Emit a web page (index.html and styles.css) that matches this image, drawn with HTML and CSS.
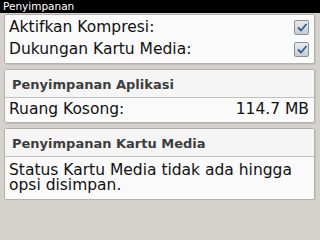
FILE: index.html
```html
<!DOCTYPE html>
<html lang="id">
<head>
  <meta charset="UTF-8" />
  <title>Penyimpanan</title>
  <link rel="stylesheet" href="styles.css">
</head>
<body>
  <div class="titlebar">Penyimpanan</div>
  <div class="content">
    <div class="card">
      <div class="row">
        <span>Aktifkan Kompresi:</span>
        <span class="check"><svg viewBox="0 0 14 14" width="14" height="14"><path d="M3 7.5 L6 10.5 L11.5 4" fill="none" stroke="#2e5f9e" stroke-width="1.8"/></svg></span>
      </div>
      <div class="row">
        <span>Dukungan Kartu Media:</span>
        <span class="check"><svg viewBox="0 0 14 14" width="14" height="14"><path d="M3 7.5 L6 10.5 L11.5 4" fill="none" stroke="#2e5f9e" stroke-width="1.8"/></svg></span>
      </div>
    </div>

    <div class="card">
      <div class="card-head">Penyimpanan Aplikasi</div>
      <div class="row">
        <span>Ruang Kosong:</span>
        <span>114.7 MB</span>
      </div>
    </div>

    <div class="card">
      <div class="card-head">Penyimpanan Kartu Media</div>
      <div class="note">Status Kartu Media tidak ada hingga opsi disimpan.</div>
    </div>
  </div>
</body>
</html>
```

FILE: styles.css
```css
body {
  margin: 0;
  background-color: #d5d2ce;
  font-family: 'DejaVu Sans', sans-serif;
  color: #111;
}
.titlebar {
  height: 13px;
  line-height: 13px;
  background-color: #000;
  color: #fff;
  font-size: 10.5px;
  padding-left: 3px;
}
.content {
  display: flex;
  flex-direction: column;
  gap: 5px;
  padding: 1px 5px 0 4px;
}
.card {
  background-color: #fafafa;
  border: 1px solid #b5b2ae;
  border-radius: 2px;
  box-shadow: 1px 1px 0 #c4c1bd;
  padding-bottom: 3px;
}
.card:first-child {
  padding-top: 1px;
  padding-bottom: 3px;
}
.card:first-child .row {
  height: 22px;
}
.row {
  display: flex;
  justify-content: space-between;
  align-items: center;
  height: 21px;
  font-size: 15.5px;
  padding: 0 5px 0 4px;
}
.check {
  width: 15px;
  height: 15px;
  border: 1px solid #8d9196;
  border-radius: 2px;
  background: linear-gradient(#e9eaec, #c9ccd0);
  box-sizing: border-box;
  display: flex;
  align-items: center;
  justify-content: center;
}
.check svg {
  flex: none;
}
.card-head {
  height: 27px;
  line-height: 29px;
  font-size: 13px;
  font-weight: bold;
  color: #3d3d3d;
  padding-left: 7px;
  border-bottom: 1px solid #c2c0bd;
  background-color: #f5f5f5;
}
.note {
  font-size: 15.5px;
  line-height: 15px;
  padding: 6px 4px 3px 4px;
}
```
